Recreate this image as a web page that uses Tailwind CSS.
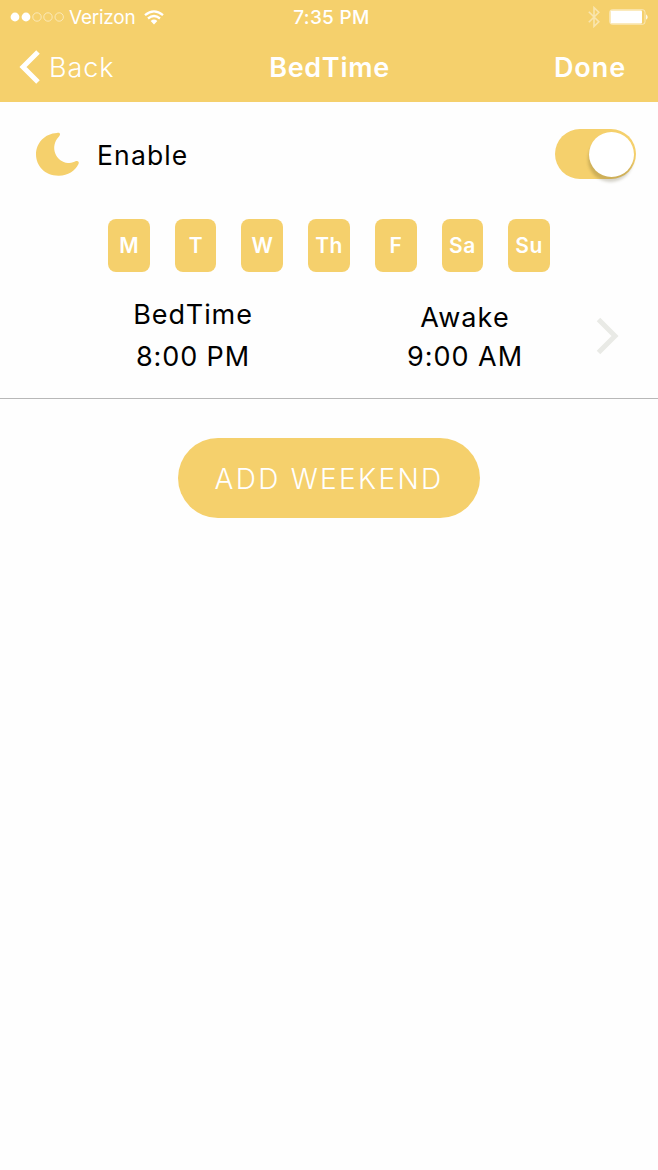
<!DOCTYPE html>
<html lang="en">
<head>
<meta charset="utf-8">
<meta name="viewport" content="width=device-width, initial-scale=1">
<title>BedTime</title>
<script src="https://cdn.jsdelivr.net/npm/@tailwindcss/browser@4"></script>
</head>
<body class="min-h-screen bg-[#fefefe] font-['Inter',sans-serif] text-black">
<header class="h-[102px] bg-[#f5d06c] text-white">
  <div class="grid h-8 grid-cols-3 items-center pr-[9px] pl-[10px]">
    <div class="flex items-center">
      <svg class="h-3 w-[54px]" viewBox="0 0 54 12"><g fill="#fff"><circle cx="5" cy="6" r="4.4"/><circle cx="16" cy="6" r="4.4"/></g><g fill="none" stroke="#fff" stroke-opacity=".5"><circle cx="27" cy="6" r="4.2"/><circle cx="38" cy="6" r="4.2"/><circle cx="49.200" cy="6" r="4.2"/></g></svg>
      <span class="ml-[5px] pt-0.5 text-[19px] leading-8 tracking-[-0.25px]">Verizon</span>
      <svg class="ml-[9px] h-[15px] w-5" viewBox="0 0 20 15"><g fill="none" stroke="#fff" stroke-width="2.300"><path d="M1 5.200Q10-2.500 19 5.200M4 8.500Q10 3.400 16 8.500"/></g><path d="M6.700 11Q10 8.200 13.300 11L10 14.400Z" fill="#fff"/></svg>
    </div>
    <div class="pt-0.5 pl-1 text-center text-[19px] leading-8 font-medium tracking-[0.3px]">7:35 PM</div>
    <div class="flex items-center justify-end">
      <svg class="h-[22px] w-3" viewBox="0 0 12 22" fill="none" stroke="#fff" stroke-opacity=".45" stroke-width="1.600"><path d="M.8 5.700 10.800 15.800 6 20.400V1.600L10.800 6.200.8 16.300"/></svg>
      <svg class="ml-[9px] h-4 w-10" viewBox="0 0 40 16"><rect x=".7" y=".7" width="35.300" height="14.600" rx="2.500" fill="none" stroke="#fff" stroke-opacity=".5"/><rect x="1.500" y="1.500" width="31.500" height="13" rx="1" fill="#fff"/><path d="M37.200 5.200Q40 8 37.200 10.800Z" fill="#fff"/></svg>
    </div>
  </div>
  <nav class="grid h-[70px] grid-cols-[1fr_auto_1fr] items-center pr-[32px] pl-[19px]">
    <div class="flex items-center">
      <svg class="h-[34px] w-[21px]" viewBox="0 0 21 34" fill="none" stroke="#fff" stroke-width="5"><path d="M19 2 4 17 19 32"/></svg>
      <span class="ml-[9px] pt-0.5 text-[27px] leading-9 font-light tracking-[0.9px]">Back</span>
    </div>
    <h1 class="pt-0.5 pl-[14px] text-center text-[27px] leading-9 font-[560] tracking-[0.7px]">BedTime</h1>
    <div class="pt-0.5 text-right text-[27px] leading-9 font-[560] tracking-[0.9px]">Done</div>
  </nav>
</header>
<main>
  <section class="flex h-[104px] items-center pr-[22px] pl-[35px]">
    <svg class="h-11 w-[45px]" viewBox="0 0 45 44" fill="#f5d06c"><path d="M22 1C25 .3 26 2.200 24 4.500C14 15 21 30 33 31C37 31.300 38.500 30 41 29.100C43.200 28.500 44.500 30 43.500 32C40 39 33 43.500 24 43.700C10 44 1 34 1 22.300C1 11 10 1.400 22 1Z"/></svg>
    <span class="ml-[17px] pt-0.5 text-[26.500px] leading-9 font-[370] tracking-[1.150px]">Enable</span>
    <div class="ml-auto flex h-[50px] w-[81px] items-center justify-end rounded-full bg-[#f5d06c] pr-0.5">
      <div class="size-[45px] rounded-full bg-white shadow-[-1px_5px_3px_rgba(70,60,20,0.22)]"></div>
    </div>
  </section>
  <div class="mt-[13px] flex justify-center gap-[25px] text-[21px] font-[560] text-white">
    <div class="flex h-[53px] w-[41.700px] items-center justify-center rounded-lg bg-[#f5d06c] pt-px">M</div>
    <div class="flex h-[53px] w-[41.700px] items-center justify-center rounded-lg bg-[#f5d06c] pt-px">T</div>
    <div class="flex h-[53px] w-[41.700px] items-center justify-center rounded-lg bg-[#f5d06c] pt-px">W</div>
    <div class="flex h-[53px] w-[41.700px] items-center justify-center rounded-lg bg-[#f5d06c] pt-px tracking-[0.5px]">Th</div>
    <div class="flex h-[53px] w-[41.700px] items-center justify-center rounded-lg bg-[#f5d06c] pt-px">F</div>
    <div class="flex h-[53px] w-[41.700px] items-center justify-center rounded-lg bg-[#f5d06c] pt-px tracking-[0.5px]">Sa</div>
    <div class="flex h-[53px] w-[41.700px] items-center justify-center rounded-lg bg-[#f5d06c] pt-px tracking-[0.5px]">Su</div>
  </div>
  <section class="flex h-[127px] border-b border-[#b8b8b8] pt-[25px] pl-[57px] text-[27px] leading-9 font-[370]">
    <div class="w-[272px] text-center">
      <div class="tracking-[0.9px]">BedTime</div>
      <div class="mt-[6px] tracking-[0.9px]">8:00 PM</div>
    </div>
    <div class="w-[272px] pt-[3px] text-center">
      <div class="tracking-[1.100px]">Awake</div>
      <div class="mt-[3px] tracking-[1px]">9:00 AM</div>
    </div>
    <svg class="mt-5 -ml-[5px] h-[38px] w-[23px]" viewBox="0 0 23 38" fill="none" stroke="#e9eae6" stroke-width="5"><path d="M2.500 2.500 19 19 2.500 35.500"/></svg>
  </section>
  <div class="flex justify-center pt-[39px]">
    <button class="h-20 w-[302px] rounded-full bg-[#f5d06c] pt-0.5 text-[28px] leading-9 font-light tracking-[2.300px] text-white">ADD WEEKEND</button>
  </div>
</main>
</body>
</html>
